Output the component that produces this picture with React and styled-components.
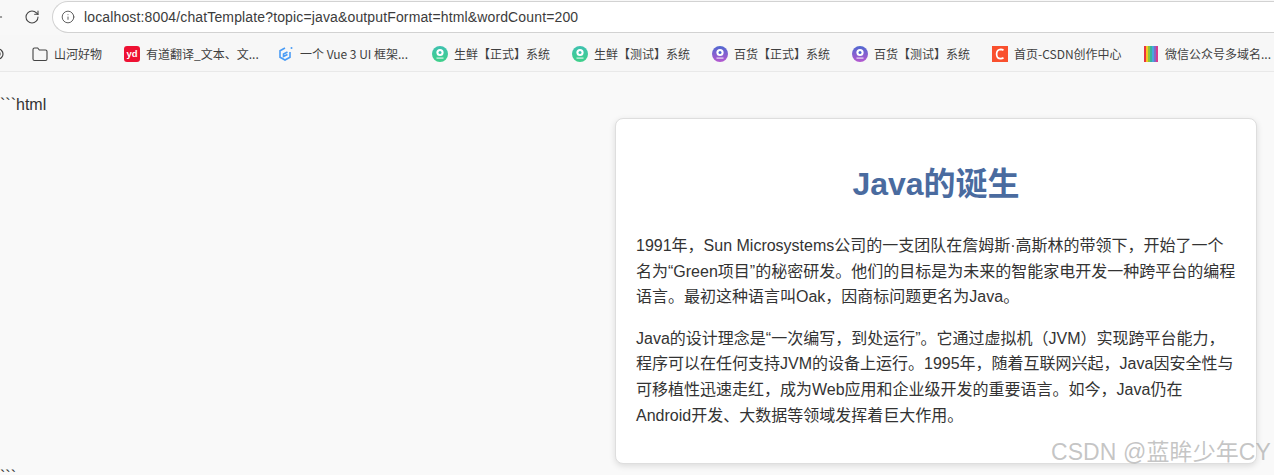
import React from "react";
import styled, { createGlobalStyle } from "styled-components";
import { RotateCw, Info, ArrowLeft } from "lucide-react";

const GlobalStyle = createGlobalStyle`
  html, body {
    margin: 0;
    padding: 0;
    height: 475px;
    overflow: hidden;
    background: #f9f9f9;
  }
`;

const uiFont = `"Noto Sans CJK SC", "Noto Sans", sans-serif`;
const pageFont = `"Liberation Sans", "Noto Sans CJK SC", sans-serif`;

const Window = styled.div`
  position: relative;
  width: 1274px;
  height: 475px;
  overflow: hidden;
`;

const Toolbar = styled.div`
  display: flex;
  align-items: center;
  height: 35px;
  background: #f8f8f8;
  box-sizing: border-box;
  padding-bottom: 1px;
`;

const NavButton = styled.div`
  display: flex;
  align-items: center;
  justify-content: center;
  flex: none;
  width: ${(p) => p.$width}px;
  margin-left: ${(p) => p.$left || 0}px;
  overflow: hidden;
  color: #444;
`;

const AddressBar = styled.div`
  display: flex;
  align-items: center;
  flex: 1;
  height: 32px;
  margin-left: 11px;
  padding-left: 8px;
  background: #fff;
  border: 1px solid #d2d2d2;
  border-right: none;
  border-radius: 16px 0 0 16px;
  box-sizing: border-box;
  color: #555;
`;

const Url = styled.span`
  margin-left: 9px;
  font: 14px "Liberation Sans", sans-serif;
  letter-spacing: 0.14px;
  color: #3c3c3c;
`;

const Bookmarks = styled.div`
  display: flex;
  align-items: center;
  height: 37px;
  padding-top: 1px;
  background: #f7f7f7;
  border-bottom: 1px solid #e9e9e9;
  box-sizing: border-box;
  font: 12px/16px ${uiFont};
  color: #3f3f3f;
`;

const Divider = styled.div`
  width: 1px;
  height: 16px;
  margin: 0 13px 0 15px;
  background: #d8d8d8;
`;

const Bookmark = styled.div`
  display: flex;
  align-items: center;
  flex: none;
  gap: 6px;
  width: ${(p) => p.$width}px;
  white-space: nowrap;

  svg {
    flex: none;
  }
`;

const Clipped = styled.div`
  width: 4px;
  overflow: hidden;
  display: flex;
  justify-content: flex-end;
  flex: none;

  svg {
    flex: none;
  }
`;

const Page = styled.div`
  background: #f9f9f9;
  font: 16px/25.6px ${pageFont};
  color: #333;
`;

const Fence = styled.div`
  height: ${(p) => p.$height}px;
  padding-top: ${(p) => p.$top}px;
  box-sizing: content-box;
  white-space: nowrap;
`;

const Card = styled.article`
  box-sizing: border-box;
  width: 642px;
  height: 346px;
  margin-left: 615px;
  padding: 20px;
  background: #fff;
  border: 1px solid #dedede;
  border-radius: 8px;
  box-shadow: 0 2px 6px rgba(0, 0, 0, 0.12);
`;

const Title = styled.h1`
  margin: 27px 0 31px;
  font-size: 32px;
  line-height: 36px;
  font-weight: 700;
  text-align: center;
  color: #4a6b9f;
`;

const Paragraph = styled.p`
  margin: 0 0 16px;
  width: 600px;
`;

const Watermark = styled.div`
  position: absolute;
  right: 3px;
  top: 437px;
  font: 23px/30px ${pageFont};
  letter-spacing: 0.1px;
  color: rgba(140, 140, 140, 0.5);
  white-space: nowrap;
`;

const FolderIcon = () => (
  <svg width="16" height="16" viewBox="0 0 16 16" fill="none" stroke="#444" strokeWidth="1.1">
    <path d="M1 13V3.5A1.5 1.5 0 0 1 2.5 2h3.2l1.6 2h6.2A1.5 1.5 0 0 1 15 5.5V13a1.5 1.5 0 0 1-1.5 1.5h-11A1.5 1.5 0 0 1 1 13Z" />
  </svg>
);

const YoudaoIcon = () => (
  <svg width="16" height="16" viewBox="0 0 16 16">
    <rect width="16" height="16" rx="3" fill="#ee1133" />
    <text x="8" y="11" textAnchor="middle" fontSize="9.5" fontWeight="700" fontFamily="Liberation Sans" fill="#fff">yd</text>
  </svg>
);

const VueUiIcon = () => (
  <svg width="16" height="16" viewBox="0 0 16 16" fill="none" stroke="#4a9cf5" strokeWidth="1.6">
    <path d="M7 2 2 4.8v6.4L7 14l5-2.8V6" />
    <path d="M9.5 6 5.5 8v2.5l4-2" />
    <circle cx="13.5" cy="2" r="1" fill="#4a9cf5" stroke="none" />
  </svg>
);

const RoundLogo = ({ from, to }) => {
  const id = `logo-${from.slice(1)}`;
  return (
    <svg width="16" height="16" viewBox="0 0 16 16">
      <defs>
        <linearGradient id={id} x1="0" y1="0" x2="0" y2="1">
          <stop offset="0" stopColor={from} />
          <stop offset="1" stopColor={to} />
        </linearGradient>
      </defs>
      <circle cx="8" cy="8" r="8" fill={`url(#${id})`} />
      <circle cx="8" cy="6.5" r="3.6" fill="#fff" />
      <circle cx="8" cy="6.5" r="1.5" fill={from} />
      <rect x="4.5" y="11.5" width="7" height="1.2" fill="#fff" opacity="0.8" />
    </svg>
  );
};

const CsdnIcon = () => (
  <svg width="16" height="16" viewBox="0 0 16 16">
    <rect width="16" height="16" fill="#f9502e" />
    <path d="M11.5 4.2A5 5 0 0 0 8.8 3.3C6.2 3.3 4.6 5.3 4.6 8s1.6 4.7 4.2 4.7a5 5 0 0 0 2.7-.9" fill="none" stroke="#fff" strokeWidth="1.7" />
  </svg>
);

const StripesIcon = () => (
  <svg width="16" height="16" viewBox="0 0 16 16">
    {["#e8343f", "#f6c622", "#8cc63f", "#37b59b", "#4aa3df", "#7d6cc4", "#d63b8f"].map((c, i) => (
      <rect key={c} x={1 + i * 2} y="0" width="2" height="16" fill={c} />
    ))}
  </svg>
);

const green = { from: "#3fc1b0", to: "#3ed08a" };
const purple = { from: "#4f68d0", to: "#b659d0" };

const bookmarks = [
  { width: 92, icon: <FolderIcon />, label: "山河好物" },
  { width: 154, icon: <YoudaoIcon />, label: "有道翻译_文本、文..." },
  { width: 154, icon: <VueUiIcon />, label: "一个 Vue 3 UI 框架..." },
  { width: 140, icon: <RoundLogo {...green} />, label: "生鲜【正式】系统" },
  { width: 140, icon: <RoundLogo {...green} />, label: "生鲜【测试】系统" },
  { width: 140, icon: <RoundLogo {...purple} />, label: "百货【正式】系统" },
  { width: 140, icon: <RoundLogo {...purple} />, label: "百货【测试】系统" },
  { width: 151, icon: <CsdnIcon />, label: "首页-CSDN创作中心" },
  { width: 140, icon: <StripesIcon />, label: "微信公众号多域名..." },
];

export default function App() {
  return (
    <Window>
      <GlobalStyle />
      <Toolbar>
        <NavButton $width={7}>
          <ArrowLeft size={16} strokeWidth={1.5} style={{ marginLeft: -14, flex: "none" }} />
        </NavButton>
        <NavButton $width={18} $left={16}>
          <RotateCw size={16} strokeWidth={1.6} />
        </NavButton>
        <AddressBar>
          <Info size={14} strokeWidth={1.6} />
          <Url>localhost:8004/chatTemplate?topic=java&amp;outputFormat=html&amp;wordCount=200</Url>
        </AddressBar>
      </Toolbar>
      <Bookmarks>
        <Clipped>
          <svg width="12" height="12" viewBox="0 0 12 12" fill="none" stroke="#444" strokeWidth="1.2">
            <circle cx="6" cy="6" r="5" />
            <circle cx="6" cy="6" r="2" />
          </svg>
        </Clipped>
        <Divider />
        {bookmarks.map((b) => (
          <Bookmark key={b.label} $width={b.width}>
            {b.icon}
            {b.label}
          </Bookmark>
        ))}
      </Bookmarks>
      <Page>
        <Fence $top={20} $height={26}>```html</Fence>
        <Card>
          <Title>Java的诞生</Title>
          <Paragraph>
            1991年，Sun Microsystems公司的一支团队在詹姆斯·高斯林的带领下，开始了一个名为“Green项目”的秘密研发。他们的目标是为未来的智能家电开发一种跨平台的编程语言。最初这种语言叫Oak，因商标问题更名为Java。
          </Paragraph>
          <Paragraph>
            Java的设计理念是“一次编写，到处运行”。它通过虚拟机（JVM）实现跨平台能力，程序可以在任何支持JVM的设备上运行。1995年，随着互联网兴起，Java因安全性与可移植性迅速走红，成为Web应用和企业级开发的重要语言。如今，Java仍在 Android开发、大数据等领域发挥着巨大作用。
          </Paragraph>
        </Card>
        <Fence $top={0} $height={20}>```</Fence>
      </Page>
      <Watermark>CSDN @蓝眸少年CY</Watermark>
    </Window>
  );
}
